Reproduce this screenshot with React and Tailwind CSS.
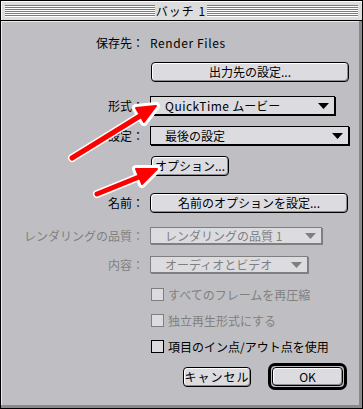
import React from 'react'

const font = "font-['Noto_Sans_CJK_JP',sans-serif]"

function Stripes({ className }) {
  return (
    <div className={`flex flex-col gap-px ${className}`}>
      {[0, 1, 2, 3, 4, 5].map((i) => (
        <div key={i} className="h-px bg-[#7b7b7b] shadow-[0_1px_0_#ffffff]" />
      ))}
    </div>
  )
}

function Button({ className, children }) {
  return (
    <div
      className={`flex items-center justify-center rounded-[4px] border border-black bg-[#dcdce0] text-black shadow-[inset_1px_1px_0_#ffffff,inset_-1px_-1px_0_#8c8c92] ${className}`}
    >
      {children}
    </div>
  )
}

function Popup({ className, children, disabled }) {
  return (
    <div
      className={`flex items-center justify-between border bg-[#dcdce0] pl-[14px] pr-[5px] ${
        disabled
          ? 'border-[#7f7f7f] text-[#7f7f7f] shadow-[1px_1px_0_#7f7f7f]'
          : 'border-black text-black shadow-[1px_1px_0_#000000]'
      } ${className}`}
    >
      <span>{children}</span>
      <svg width="11" height="6" viewBox="0 0 11 6">
        <polygon points="0,0 11,0 5.5,6" fill={disabled ? '#7f7f7f' : '#000000'} />
      </svg>
    </div>
  )
}

function Check({ label, disabled }) {
  return (
    <div className="ml-[150px] flex h-[13px] items-center gap-[4px]">
      <div
        className={`h-[13px] w-[13px] border bg-[#dcdce0] ${
          disabled ? 'border-[#7f7f7f]' : 'border-black'
        }`}
      />
      <span className={disabled ? 'text-[#7f7f7f]' : 'text-black'}>{label}</span>
    </div>
  )
}

function Row({ className, label, disabled, children }) {
  return (
    <div className={`flex items-center ${className}`}>
      <div
        className={`w-[145px] shrink-0 pr-[2px] text-right ${
          disabled ? 'text-[#7f7f7f]' : 'text-black'
        }`}
      >
        {label}
      </div>
      <div className="pl-[4px]">{children}</div>
    </div>
  )
}

function Arrows() {
  return (
    <svg className="pointer-events-none absolute left-0 top-0" width="363" height="409">
      <g stroke="#ffffff" strokeWidth="8" strokeLinejoin="round" strokeLinecap="round" fill="#ffffff">
        <line x1="72" y1="158" x2="140" y2="116" />
        <polygon points="156,106 144,122 136,108" />
        <line x1="97" y1="194" x2="139" y2="177" />
        <polygon points="157,169 142,184 136,169" />
      </g>
      <g stroke="#ff0000" strokeWidth="5" strokeLinejoin="round" strokeLinecap="round" fill="#ff0000">
        <line x1="72" y1="158" x2="140" y2="116" />
        <polygon points="156,106 144,122 136,108" strokeWidth="2" />
        <line x1="97" y1="194" x2="139" y2="177" />
        <polygon points="157,169 142,184 136,169" strokeWidth="2" />
      </g>
    </svg>
  )
}

export default function App() {
  return (
    <div className={`relative h-[409px] w-[363px] bg-black ${font} text-[12px] leading-none`}>
      <div className="flex h-full flex-col border border-black">
        {/* title bar */}
        <div className="flex h-[20px] shrink-0 items-center border-b border-black bg-[#dddddd] pl-[4px] pr-[4px] shadow-[inset_1px_1px_0_#ffffff]">
          <Stripes className="w-[150px]" />
          <div className="w-[52px] text-center tracking-[1px] text-black">バッチ 1</div>
          <Stripes className="flex-1" />
        </div>

        {/* body */}
        <div className="flex flex-1 flex-col border-r-[3px] border-b-[3px] border-r-[#8a8a8e] border-b-[#8a8a8e] bg-[#bfbfc3] shadow-[inset_1px_1px_0_#e8e8ea]">
          <Row className="mt-[14px] h-[16px]" label="保存先：">
            <span className="tracking-[0.6px]">Render Files</span>
          </Row>

          <div className="mt-[11px] ml-[150px]">
            <Button className="h-[20px] w-[198px]">出力先の設定...</Button>
          </div>

          <Row className="mt-[14px]" label="形式：">
            <Popup className="h-[19px] w-[185px]">
              <span className="tracking-[0.5px]">QuickTime</span> ムービー
            </Popup>
          </Row>

          <Row className="mt-[11px]" label="設定：">
            <Popup className="h-[19px] w-[199px]">最後の設定</Popup>
          </Row>

          <div className="mt-[11px] ml-[150px]">
            <Button className="h-[20px] w-[78px]">オプション...</Button>
          </div>

          <Row className="mt-[17px]" label="名前：">
            <Button className="h-[20px] w-[198px]">名前のオプションを設定...</Button>
          </Row>

          <Row className="mt-[14px]" label="レンダリングの品質：" disabled>
            <Popup className="h-[17px] w-[172px]" disabled>
              レンダリングの品質 1
            </Popup>
          </Row>

          <Row className="mt-[12px]" label="内容：" disabled>
            <Popup className="h-[17px] w-[158px]" disabled>
              オーディオとビデオ
            </Popup>
          </Row>

          <div className="mt-[15px]">
            <Check label="すべてのフレームを再圧縮" disabled />
          </div>
          <div className="mt-[13px]">
            <Check label="独立再生形式にする" disabled />
          </div>
          <div className="mt-[13px]">
            <Check label="項目のイン点/アウト点を使用" />
          </div>

          <div className="mt-[10px] flex items-center gap-[17px] pl-[182px]">
            <Button className="h-[20px] w-[68px] tracking-[1px]">キャンセル</Button>
            <div className="rounded-[7px] border-[3px] border-black p-px">
              <Button className="h-[19px] w-[71px]">OK</Button>
            </div>
          </div>
        </div>
      </div>
      <Arrows />
    </div>
  )
}
